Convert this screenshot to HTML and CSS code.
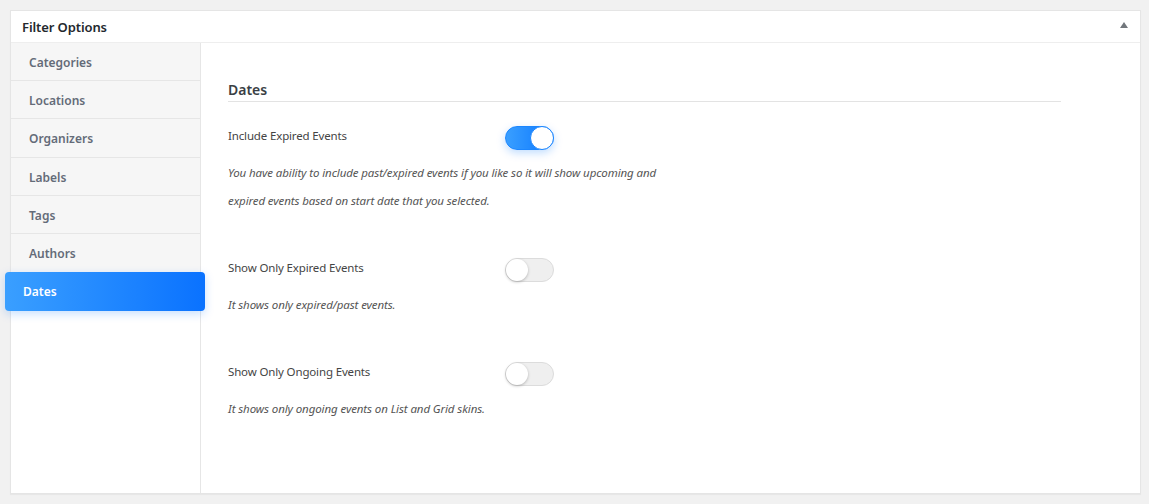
FILE: index.html
```html
<!DOCTYPE html>
<html>
<head>
<meta charset="utf-8">
<link rel="stylesheet" href="styles.css">
</head>
<body>
<div class="panel">
  <div class="panel-head">
    <span class="panel-title">Filter Options</span>
    <span class="toggle-arrow"></span>
  </div>
  <div class="panel-body">
    <ul class="side">
      <li class="side-item">Categories</li>
      <li class="side-item">Locations</li>
      <li class="side-item">Organizers</li>
      <li class="side-item">Labels</li>
      <li class="side-item">Tags</li>
      <li class="side-item">Authors</li>
      <li class="side-item active">Dates</li>
    </ul>
    <div class="content">
      <h3 class="section-title">Dates</h3>
      <div class="option">
        <div class="option-row">
          <span class="option-label">Include Expired Events</span>
          <span class="switch on"><span class="knob"></span></span>
        </div>
        <p class="option-desc">You have ability to include past/expired events if you like so it will show upcoming and expired events based on start date that you selected.</p>
      </div>
      <div class="option">
        <div class="option-row">
          <span class="option-label">Show Only Expired Events</span>
          <span class="switch"><span class="knob"></span></span>
        </div>
        <p class="option-desc">It shows only expired/past events.</p>
      </div>
      <div class="option">
        <div class="option-row">
          <span class="option-label">Show Only Ongoing Events</span>
          <span class="switch"><span class="knob"></span></span>
        </div>
        <p class="option-desc">It shows only ongoing events on List and Grid skins.</p>
      </div>
    </div>
  </div>
</div>
</body>
</html>
```
FILE: styles.css
```css
html, body {
  margin: 0;
  padding: 0;
}
body {
  background: #f1f1f1;
  font-family: "Noto Sans", "Open Sans", sans-serif;
  color: #444;
  padding: 10px 8px 10px 10px;
}
.panel {
  background: #fff;
  border: 1px solid #e5e5e5;
  box-shadow: 0 1px 1px rgba(0,0,0,0.04);
  height: 484px;
  box-sizing: border-box;
  display: flex;
  flex-direction: column;
}
.panel-head {
  height: 31px;
  flex-shrink: 0;
  border-bottom: 1px solid #eee;
  display: flex;
  align-items: center;
  justify-content: space-between;
  padding: 0 12px 0 11px;
}
.panel-title {
  font-size: 13px;
  font-weight: 600;
  color: #23282d;
  letter-spacing: -0.1px;
}
.toggle-arrow {
  width: 0;
  height: 0;
  border-left: 4px solid transparent;
  border-right: 4px solid transparent;
  border-bottom: 6px solid #72777c;
  margin-top: -3px;
}
.panel-body {
  flex: 1;
  display: flex;
}
.side {
  list-style: none;
  margin: 0;
  padding: 0;
  width: 189px;
  border-right: 1px solid #e6e6e6;
  flex-shrink: 0;
}
.side-item {
  height: 37px;
  line-height: 39px;
  background: #f6f6f6;
  border-bottom: 1px solid #e6e6e6;
  padding-left: 18px;
  font-size: 12px;
  font-weight: 600;
  color: #646b78;
}
.side-item:nth-child(3) {
  height: 38px;
}
.side-item:nth-child(6) {
  border-bottom: none;
  height: 38px;
}
.side-item.active {
  margin-left: -6px;
  width: 200px;
  box-sizing: border-box;
  height: 39px;
  line-height: 39px;
  padding-left: 18px;
  border: none;
  border-radius: 4px;
  background: linear-gradient(90deg, #3a9fff 0%, #0a72ff 100%);
  color: #fff;
  font-weight: 600;
  box-shadow: 0 3px 10px rgba(0, 115, 255, 0.22);
  position: relative;
}
.content {
  flex: 1;
  padding: 36px 0 0 27px;
}
.section-title {
  width: 833px;
  margin: 0;
  font-size: 14px;
  font-weight: 600;
  color: #3a3f45;
  line-height: 21px;
  padding-bottom: 1px;
  border-bottom: 1px solid #e3e3e3;
}
.option {
  margin-top: 24px;
}
.option + .option {
  margin-top: 43px;
}
.option-row {
  display: flex;
  align-items: center;
  height: 24px;
}
.option-label {
  width: 277px;
  font-size: 11.5px;
  letter-spacing: -0.15px;
  color: #444;
  margin-top: -6px;
}
.switch {
  width: 49px;
  height: 24px;
  box-sizing: border-box;
  border-radius: 12px;
  background: #efefef;
  border: 1px solid #dcdcdc;
  position: relative;
  display: flex;
  align-items: center;
}
.switch .knob {
  width: 22px;
  height: 22px;
  border-radius: 50%;
  background: #fff;
  box-shadow: 0 1px 3px rgba(0,0,0,0.25);
}
.switch.on {
  background: linear-gradient(90deg, #3a9fff 0%, #0a77ff 100%);
  border-color: #1b86ff;
  justify-content: flex-end;
  box-shadow: 0 3px 8px rgba(0, 120, 255, 0.25);
}
.switch.on .knob {
  box-shadow: none;
  border: 1px solid #1b86ff;
  box-sizing: border-box;
  width: 24px;
  height: 24px;
  margin-right: -1px;
}
.option-desc {
  margin: 9px 0 0;
  width: 450px;
  font-size: 11.5px;
  letter-spacing: -0.1px;
  font-style: italic;
  line-height: 28px;
  color: #555;
}
```
